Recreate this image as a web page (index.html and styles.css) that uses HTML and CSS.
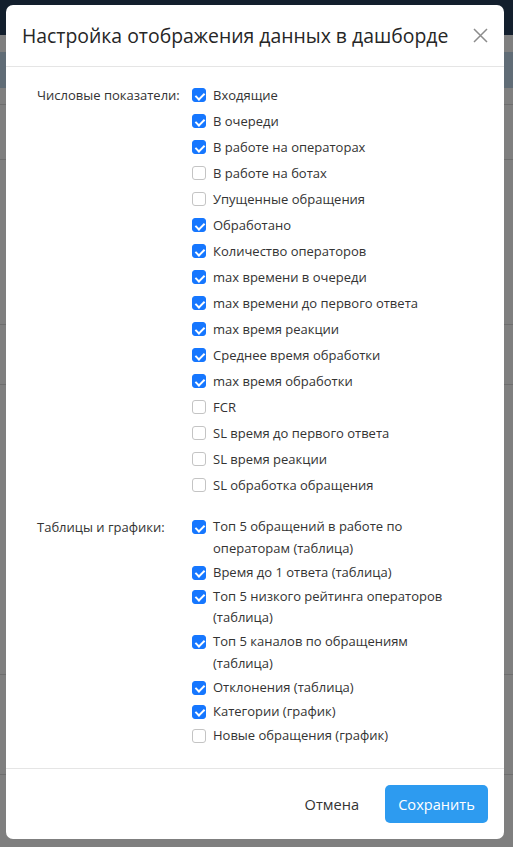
FILE: index.html
```html
<!DOCTYPE html>
<html lang="ru">
<head>
<meta charset="utf-8">
<title>Настройка дашборда</title>
<link rel="stylesheet" href="styles.css">
</head>
<body>
<div class="page">
  <div class="topbar"></div>
  <div class="subbar"></div>
  <div class="rows">
    <div class="row r1"><div class="band"></div></div>
    <div class="row r2"></div>
    <div class="row r3"></div>
    <div class="row r4"></div>
    <div class="row r5"></div>
    <div class="row r7"></div>
  </div>
</div>
<div class="overlay">
  <div class="modal">
    <div class="modal-header">
      <h1 class="modal-title">Настройка отображения данных в дашборде</h1>
      <button class="close" aria-label="Закрыть">
        <svg width="15" height="15" viewBox="0 0 15 15"><path d="M1 1L14 14M14 1L1 14" stroke="#8c8c8c" stroke-width="1.5" fill="none"/></svg>
      </button>
    </div>
    <div class="modal-body">
      <div class="group">
        <div class="group-label">Числовые показатели:</div>
        <div class="options">
          <label class="opt"><span class="box on"></span><span class="txt">Входящие</span></label>
          <label class="opt"><span class="box on"></span><span class="txt">В очереди</span></label>
          <label class="opt"><span class="box on"></span><span class="txt">В работе на операторах</span></label>
          <label class="opt"><span class="box"></span><span class="txt">В работе на ботах</span></label>
          <label class="opt"><span class="box"></span><span class="txt">Упущенные обращения</span></label>
          <label class="opt"><span class="box on"></span><span class="txt">Обработано</span></label>
          <label class="opt"><span class="box on"></span><span class="txt">Количество операторов</span></label>
          <label class="opt"><span class="box on"></span><span class="txt">max времени в очереди</span></label>
          <label class="opt"><span class="box on"></span><span class="txt">max времени до первого ответа</span></label>
          <label class="opt"><span class="box on"></span><span class="txt">max время реакции</span></label>
          <label class="opt"><span class="box on"></span><span class="txt">Среднее время обработки</span></label>
          <label class="opt"><span class="box on"></span><span class="txt">max время обработки</span></label>
          <label class="opt"><span class="box"></span><span class="txt">FCR</span></label>
          <label class="opt"><span class="box"></span><span class="txt">SL время до первого ответа</span></label>
          <label class="opt"><span class="box"></span><span class="txt">SL время реакции</span></label>
          <label class="opt"><span class="box"></span><span class="txt">SL обработка обращения</span></label>
        </div>
      </div>
      <div class="group second">
        <div class="group-label">Таблицы и графики:</div>
        <div class="options">
          <label class="opt"><span class="box on"></span><span class="txt">Топ 5 обращений в работе по операторам (таблица)</span></label>
          <label class="opt"><span class="box on"></span><span class="txt">Время до 1 ответа (таблица)</span></label>
          <label class="opt"><span class="box on"></span><span class="txt">Топ 5 низкого рейтинга операторов (таблица)</span></label>
          <label class="opt"><span class="box on"></span><span class="txt">Топ 5 каналов по обращениям (таблица)</span></label>
          <label class="opt"><span class="box on"></span><span class="txt">Отклонения (таблица)</span></label>
          <label class="opt"><span class="box on"></span><span class="txt">Категории (график)</span></label>
          <label class="opt"><span class="box"></span><span class="txt">Новые обращения (график)</span></label>
        </div>
      </div>
    </div>
    <div class="modal-footer">
      <button class="btn btn-text">Отмена</button>
      <button class="btn btn-primary">Сохранить</button>
    </div>
  </div>
</div>
</body>
</html>
```
FILE: styles.css
```css
* { box-sizing: border-box; }
html, body { margin: 0; padding: 0; }
body {
  width: 513px;
  height: 847px;
  overflow: hidden;
  font-family: "Open Sans", "Noto Sans", sans-serif;
  background: #fff;
  color: #333;
  position: relative;
}
.page { width: 513px; height: 847px; background: #fff; }
.topbar { height: 35px; background: #263f5a; }
.subbar { height: 17px; background: #fff; }
.rows { display: flex; flex-direction: column; }
.row { border-bottom: 1px solid #ddd; }
.r1 { height: 53px; }
.band { height: 36px; background: #c0d8ec; }
.r2 { height: 55px; }
.r3 { height: 165px; }
.r4 { height: 60px; }
.r5 { height: 290px; }
.r7 { height: 100px; }

.overlay {
  position: absolute;
  inset: 0;
  background: rgba(0, 0, 0, 0.5);
  padding: 5px 9px 8px 6px;
}
.modal {
  width: 498px;
  height: 834px;
  background: #fff;
  border-radius: 7px;
  display: flex;
  flex-direction: column;
}
.modal-header {
  height: 62px;
  display: flex;
  align-items: center;
  justify-content: space-between;
  padding: 0 16px 0 16px;
  border-bottom: 1px solid #e5e5e5;
  flex: none;
}
.modal-title {
  margin: 0;
  font-size: 19.4px;
  font-weight: 400;
  color: #262626;
}
.close {
  border: 0;
  background: none;
  padding: 0;
  width: 15px;
  height: 15px;
  display: flex;
}
.modal-body {
  flex: 1;
  padding: 17px 42px 0 31px;
  font-size: 13px;
  color: #333;
}
.group { display: flex; align-items: flex-start; }
.group.second { margin-top: 20px; }
.group-label { width: 155px; flex: none; line-height: 22px; }
.options { display: flex; flex-direction: column; gap: 4px; flex: 1; }
.opt { display: flex; align-items: flex-start; gap: 7px; line-height: 22px; }
.second .options { gap: 2.5px; }
.second .opt { line-height: 21.5px; }
.box {
  flex: none;
  width: 14px;
  height: 14px;
  margin-top: 4px;
  border: 1px solid #c4c4c4;
  border-radius: 3px;
  background: #fff;
  position: relative;
}
.box.on { background: #1677ff; border-color: #1677ff; }
.box.on::after {
  content: "";
  position: absolute;
  left: 3.5px;
  top: 1.5px;
  width: 4px;
  height: 7px;
  border: solid #fff;
  border-width: 0 2px 2px 0;
  transform: rotate(45deg);
}
.txt { color: #333; }
.modal-footer {
  flex: none;
  height: 71px;
  border-top: 1px solid #e5e5e5;
  display: flex;
  align-items: center;
  justify-content: flex-end;
  gap: 11px;
  padding: 0 16px;
}
.btn {
  font-family: inherit;
  font-size: 14.6px;
  border: 0;
  height: 38px;
  border-radius: 5px;
  cursor: pointer;
}
.btn-text { background: none; color: #333; padding: 0 15px; }
.btn-primary { background: #2d9bf0; color: #fff; width: 103px; }
```
